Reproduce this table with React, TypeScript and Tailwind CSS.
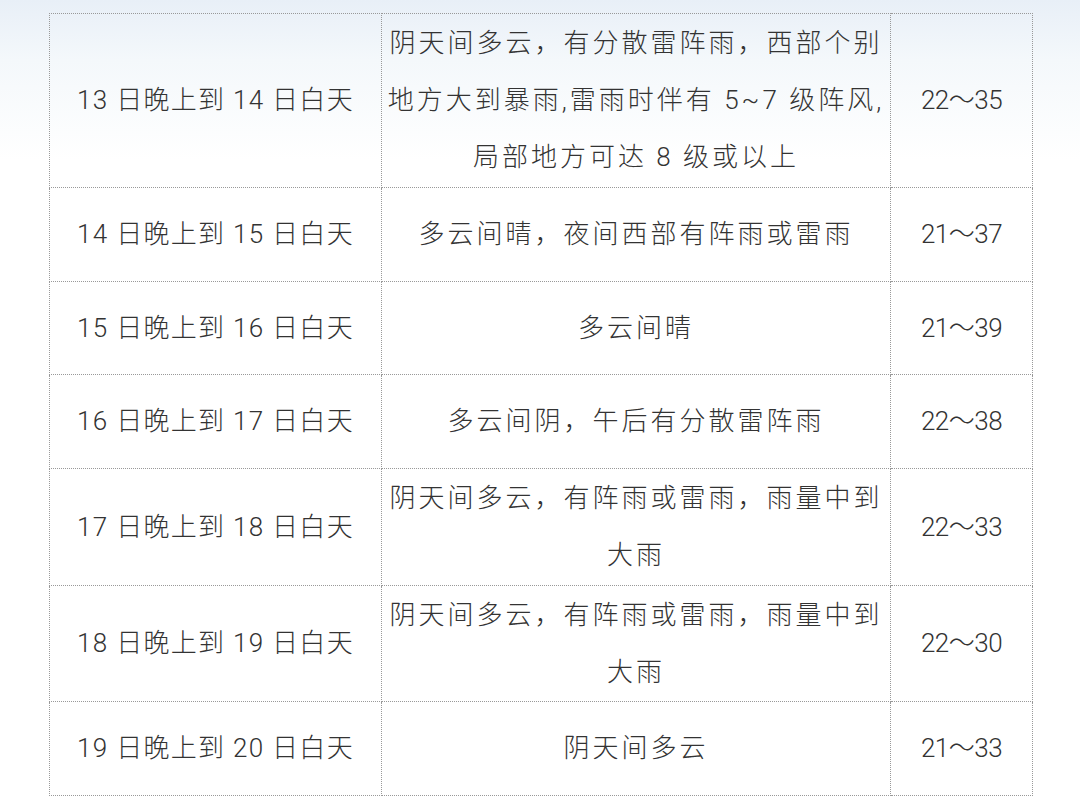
import React from "react";

type Row = { date: string; desc: string[]; temp: string; h: number };

const rows: Row[] = [
  {
    date: "13 日晚上到 14 日白天",
    desc: ["阴天间多云，有分散雷阵雨，西部个别", "地方大到暴雨,雷雨时伴有 5~7 级阵风,", "局部地方可达 8 级或以上"],
    temp: "22～35",
    h: 174,
  },
  { date: "14 日晚上到 15 日白天", desc: ["多云间晴，夜间西部有阵雨或雷雨"], temp: "21～37", h: 94 },
  { date: "15 日晚上到 16 日白天", desc: ["多云间晴"], temp: "21～39", h: 93 },
  { date: "16 日晚上到 17 日白天", desc: ["多云间阴，午后有分散雷阵雨"], temp: "22～38", h: 94 },
  { date: "17 日晚上到 18 日白天", desc: ["阴天间多云，有阵雨或雷雨，雨量中到", "大雨"], temp: "22～33", h: 117 },
  { date: "18 日晚上到 19 日白天", desc: ["阴天间多云，有阵雨或雷雨，雨量中到", "大雨"], temp: "22～30", h: 116 },
  { date: "19 日晚上到 20 日白天", desc: ["阴天间多云"], temp: "21～33", h: 94 },
];

export default function App() {
  return (
    <div
      className="w-[1080px] h-[797px] overflow-hidden bg-[linear-gradient(180deg,#e8eff7_0px,#f4f8fb_60px,#ffffff_160px,#ffffff_100%)] pt-[13px] pl-[49px] text-[#333333] font-light"
      style={{ fontFamily: 'Roboto, "Noto Sans CJK SC", sans-serif' }}
    >
      <table className="table-fixed border-collapse w-[983px]">
        <colgroup>
          <col className="w-[332px]" />
          <col className="w-[509px]" />
          <col className="w-[142px]" />
        </colgroup>
        <tbody>
          {rows.map((r, i) => (
            <tr key={i} style={{ height: r.h }}>
              <td className="border border-dotted border-[#999999] p-0 text-center align-middle text-[26px] leading-[57px] tracking-[1.3px] whitespace-nowrap">
                {r.date}
              </td>
              <td className="border border-dotted border-[#999999] p-0 text-center align-middle text-[26px] leading-[57px] tracking-[3px] whitespace-nowrap">
                {r.desc.map((l, j) => (
                  <div key={j}>{l}</div>
                ))}
              </td>
              <td className="border border-dotted border-[#999999] p-0 text-center align-middle text-[26px] leading-[57px] tracking-[-0.5px] whitespace-nowrap">
                {r.temp}
              </td>
            </tr>
          ))}
        </tbody>
      </table>
    </div>
  );
}
